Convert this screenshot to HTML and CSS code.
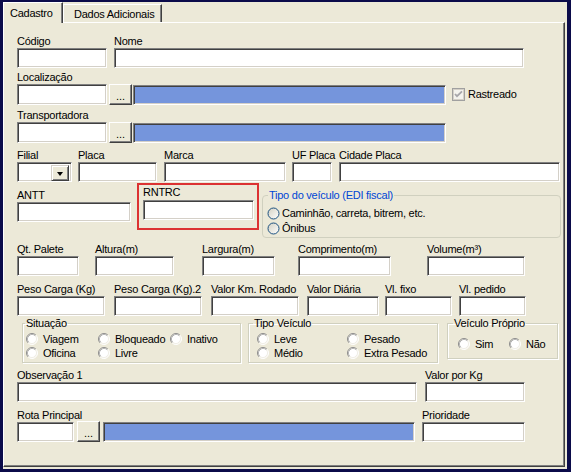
FILE: index.html
```html
<!DOCTYPE html>
<html lang="pt-BR">
<head>
<meta charset="utf-8">
<title>Cadastro</title>
<link rel="stylesheet" href="styles.css">
</head>
<body>
<svg class="defs" width="0" height="0" aria-hidden="true">
  <defs>
    <linearGradient id="xpg" x1="0" y1="0" x2="1" y2="1">
      <stop offset="0" stop-color="#D3D0C2"/>
      <stop offset="1" stop-color="#FFFFFF"/>
    </linearGradient>
    <symbol id="rc" viewBox="0 0 12 12">
      <circle cx="6" cy="6" r="5" fill="#fff"/>
      <path d="M2.11 9.89A5.5 5.5 0 0 1 9.89 2.11" fill="none" stroke="#8C8C8C"/>
      <path d="M9.89 2.11A5.5 5.5 0 0 1 2.11 9.89" fill="none" stroke="#fff"/>
      <path d="M2.82 9.18A4.5 4.5 0 0 1 9.18 2.82" fill="none" stroke="#B4B4B4"/>
      <path d="M9.18 2.82A4.5 4.5 0 0 1 2.82 9.18" fill="none" stroke="#F0EEE6"/>
    </symbol>
    <symbol id="rx" viewBox="0 0 13 13">
      <circle cx="6.5" cy="6.5" r="5.5" fill="url(#xpg)" stroke="#1C5180"/>
    </symbol>
  </defs>
</svg>
<div class="window">
  <div class="tabs">
    <div class="tab active">Cadastro</div>
    <div class="tab">Dados Adicionais</div>
  </div>
  <div class="panel">

    <div class="row r1">
      <div class="field w90"><span class="lbl">Código</span><div class="inp"></div></div>
      <div class="field w410 ml7"><span class="lbl">Nome</span><div class="inp"></div></div>
    </div>

    <div class="row r2 end">
      <div class="field w90"><span class="lbl">Localização</span><div class="inp h21"></div></div>
      <div class="dots ml2">...</div>
      <div class="bar w313 ml1"></div>
      <div class="chk ml6">
        <svg width="13" height="13" viewBox="0 0 13 13">
          <rect x="0.5" y="0.5" width="12" height="12" fill="none" stroke="#A0A0A0"/>
          <rect x="1.5" y="1.5" width="10" height="10" fill="#F4F3EE" stroke="#D4D0C8"/>
          <path d="M3 6l2 2.2L10 3.4" fill="none" stroke="#A7A6AA" stroke-width="1.8"/>
        </svg>
        <span class="chk-lbl">Rastreado</span>
      </div>
    </div>

    <div class="row r3 end">
      <div class="field w90"><span class="lbl">Transportadora</span><div class="inp h21"></div></div>
      <div class="dots ml2">...</div>
      <div class="bar w313 ml1"></div>
    </div>

    <div class="row r4">
      <div class="field w55"><span class="lbl">Filial</span>
        <div class="inp combo"><div class="drop"><span class="tri"></span></div></div>
      </div>
      <div class="field w79 ml6"><span class="lbl">Placa</span><div class="inp"></div></div>
      <div class="field w122 ml7"><span class="lbl">Marca</span><div class="inp"></div></div>
      <div class="field w40 ml6"><span class="lbl">UF Placa</span><div class="inp"></div></div>
      <div class="field w221 ml7"><span class="lbl">Cidade Placa</span><div class="inp"></div></div>
    </div>

    <div class="row r5">
      <div class="field w114 antt"><span class="lbl">ANTT</span><div class="inp"></div></div>
      <div class="redbox ml6">
        <div class="field w111"><span class="lbl">RNTRC</span><div class="inp"></div></div>
      </div>
      <fieldset class="xpgroup ml3">
        <legend>Tipo do veículo (EDI fiscal)</legend>
        <div class="xprow"><svg class="rxi" width="13" height="13"><use href="#rx"/></svg><span>Caminhão, carreta, bitrem, etc.</span></div>
        <div class="xprow"><svg class="rxi" width="13" height="13"><use href="#rx"/></svg><span>Ônibus</span></div>
      </fieldset>
    </div>

    <div class="row r6">
      <div class="field w62"><span class="lbl">Qt. Palete</span><div class="inp"></div></div>
      <div class="field w79 ml16"><span class="lbl">Altura(m)</span><div class="inp"></div></div>
      <div class="field w73 ml28"><span class="lbl">Largura(m)</span><div class="inp"></div></div>
      <div class="field w93 ml23"><span class="lbl">Comprimento(m)</span><div class="inp"></div></div>
      <div class="field w98 ml36"><span class="lbl">Volume(m³)</span><div class="inp"></div></div>
    </div>

    <div class="row r7">
      <div class="field w88"><span class="lbl">Peso Carga (Kg)</span><div class="inp"></div></div>
      <div class="field w88 ml9"><span class="lbl">Peso Carga (Kg).2</span><div class="inp"></div></div>
      <div class="field w88 ml9"><span class="lbl">Valor Km. Rodado</span><div class="inp"></div></div>
      <div class="field w72 ml8"><span class="lbl">Valor Diária</span><div class="inp"></div></div>
      <div class="field w67 ml6"><span class="lbl">Vl. fixo</span><div class="inp"></div></div>
      <div class="field w67 ml7"><span class="lbl">Vl. pedido</span><div class="inp"></div></div>
    </div>

    <div class="row r8">
      <fieldset class="grp g-sit">
        <legend>Situação</legend>
        <div class="opts">
          <div class="opt"><svg width="12" height="12"><use href="#rc"/></svg><span>Viagem</span></div>
          <div class="opt"><svg width="12" height="12"><use href="#rc"/></svg><span>Bloqueado</span></div>
          <div class="opt"><svg width="12" height="12"><use href="#rc"/></svg><span>Inativo</span></div>
          <div class="opt"><svg width="12" height="12"><use href="#rc"/></svg><span>Oficina</span></div>
          <div class="opt"><svg width="12" height="12"><use href="#rc"/></svg><span>Livre</span></div>
        </div>
      </fieldset>
      <fieldset class="grp g-tipo">
        <legend>Tipo Veículo</legend>
        <div class="opts">
          <div class="opt"><svg width="12" height="12"><use href="#rc"/></svg><span>Leve</span></div>
          <div class="opt"><svg width="12" height="12"><use href="#rc"/></svg><span>Pesado</span></div>
          <div class="opt"><svg width="12" height="12"><use href="#rc"/></svg><span>Médio</span></div>
          <div class="opt"><svg width="12" height="12"><use href="#rc"/></svg><span>Extra Pesado</span></div>
        </div>
      </fieldset>
      <fieldset class="grp g-prop">
        <legend>Veículo Próprio</legend>
        <div class="opts">
          <div class="opt"><svg width="12" height="12"><use href="#rc"/></svg><span>Sim</span></div>
          <div class="opt"><svg width="12" height="12"><use href="#rc"/></svg><span>Não</span></div>
        </div>
      </fieldset>
    </div>

    <div class="row r9">
      <div class="field w400"><span class="lbl">Observação 1</span><div class="inp"></div></div>
      <div class="field w100 ml8"><span class="lbl">Valor por Kg</span><div class="inp"></div></div>
    </div>

    <div class="row r10 end">
      <div class="field w57"><span class="lbl">Rota Principal</span><div class="inp"></div></div>
      <div class="dots ml3 h20">...</div>
      <div class="bar w312 ml3"></div>
      <div class="field w103 ml7"><span class="lbl">Prioridade</span><div class="inp"></div></div>
    </div>

  </div>
</div>
</body>
</html>
```

FILE: styles.css
```css
* { box-sizing: border-box; }
html, body { margin: 0; padding: 0; }
body {
  width: 571px;
  height: 472px;
  overflow: hidden;
  background: #0B0B4A;
  font-family: "Liberation Sans", Arial, sans-serif;
  font-size: 11px;
  line-height: 13px;
  letter-spacing: -0.25px;
  color: #000;
}
.defs { position: absolute; width: 0; height: 0; }

.window {
  margin: 2px 4px 3px 3px;
  height: 467px;
  background: #ECE9D8;
  display: flex;
  flex-direction: column;
}

/* tabs */
.tabs {
  display: flex;
  align-items: flex-end;
  height: 20px;
  position: relative;
  z-index: 2;
}
.tab {
  height: 18px;
  padding: 3px 7px 0 10px;
  border: 1px solid;
  border-color: #fff #404040 transparent #fff;
  border-bottom: none;
  box-shadow: inset -1px 0 0 #808080;
  white-space: nowrap;
  background: #ECE9D8;
}
.tab.active {
  height: 21px;
  width: 60px;
  margin-bottom: -1px;
  padding: 4px 0 0 6px;
}

/* tab panel */
.panel {
  flex: 1;
  margin: 0 2px 2px 0;
  border: 1px solid;
  border-color: #fff #404040 #404040 #fff;
  box-shadow: inset -1px -1px 0 #808080;
  padding-left: 13px;
}

.row { display: flex; align-items: flex-start; }
.row.end { align-items: flex-end; }
.field { display: flex; flex-direction: column; }
.lbl { height: 13px; white-space: nowrap; }

.inp {
  height: 20px;
  background: #fff;
  border: 1px solid;
  border-color: #808080 #fff #fff #808080;
  box-shadow: inset 1px 1px 0 #404040, inset -1px -1px 0 #D4D0C8;
}
.h21 { height: 21px; }
.h20 { height: 20px; }

.bar {
  height: 20px;
  background: #7595DC;
  border: 1px solid;
  border-color: #808080 #fff #fff #808080;
  box-shadow: inset 1px 1px 0 #404040, inset -1px -1px 0 #D4D0C8;
}

.dots {
  width: 23px;
  height: 21px;
  background: #ECE9D8;
  border: 1px solid;
  border-color: #fff #404040 #404040 #fff;
  box-shadow: inset -1px -1px 0 #808080;
  text-align: center;
  padding-top: 5px;
  letter-spacing: 0;
}

.chk { display: flex; align-items: center; margin-bottom: 4px; }
.chk svg { display: block; }
.chk-lbl { margin-left: 3px; }

.combo { display: flex; justify-content: flex-end; padding: 1px; }
.drop {
  width: 18px;
  height: 16px;
  margin: 1px;
  background: #ECE9D8;
  border: 1px solid;
  border-color: #D4D0C8 #404040 #404040 #D4D0C8;
  box-shadow: inset 1px 1px 0 #fff, inset -1px -1px 0 #808080;
  display: flex;
  align-items: center;
  justify-content: center;
}
.tri {
  width: 0; height: 0;
  border-left: 3.5px solid transparent;
  border-right: 3.5px solid transparent;
  border-top: 4px solid #000;
  margin-top: 1px;
}

/* widths and offsets */
.w40 { width: 40px; } .w55 { width: 55px; } .w57 { width: 57px; }
.w62 { width: 62px; } .w67 { width: 67px; } .w72 { width: 72px; }
.w73 { width: 73px; } .w79 { width: 79px; } .w88 { width: 88px; }
.w90 { width: 90px; } .w93 { width: 93px; } .w98 { width: 98px; }
.w100 { width: 100px; } .w103 { width: 103px; } .w111 { width: 111px; }
.w114 { width: 114px; } .w122 { width: 122px; } .w221 { width: 221px; }
.w312 { width: 312px; } .w313 { width: 313px; } .w400 { width: 400px; }
.w410 { width: 410px; }
.ml1 { margin-left: 1px; } .ml2 { margin-left: 2px; } .ml3 { margin-left: 3px; }
.ml6 { margin-left: 6px; } .ml7 { margin-left: 7px; } .ml8 { margin-left: 8px; }
.ml9 { margin-left: 9px; } .ml16 { margin-left: 16px; } .ml23 { margin-left: 23px; }
.ml28 { margin-left: 28px; } .ml36 { margin-left: 36px; }

/* row vertical placement */
.r1 { margin-top: 12px; }
.r2 { margin-top: 3px; }
.r3 { margin-top: 4px; }
.r4 { margin-top: 6px; }
.r5 { margin-top: 1px; height: 55px; }
.r6 { margin-top: 5px; }
.r7 { margin-top: 7px; }
.r8 { margin-top: 1px; }
.r9 { margin-top: 6px; }
.r10 { margin-top: 7px; }

.antt { margin-top: 6px; }
.redbox {
  width: 122px;
  height: 47px;
  border: 2px solid #DC3232;
  padding: 1px 0 0 4px;
}
.redbox .lbl { height: 14px; }

/* XP group box */
.xpgroup {
  margin: 6px 0 0 3px;
  padding: 0 0 0 4px;
  width: 299px;
  height: 49px;
  border: 1px solid #D0D0BF;
  border-radius: 4px;
  min-width: 0;
}
.xpgroup legend {
  color: #0046D5;
  padding: 0 1px;
  margin-left: 1px;
  line-height: 13px;
}
.xprow { display: flex; align-items: center; height: 15px; }
.xprow:first-of-type { margin-top: 4px; }
.rxi { display: block; margin-right: 2px; flex: none; }

/* classic group boxes */
.grp {
  margin: 0;
  padding: 0;
  min-width: 0;
  border: 1px solid #D0D0BF;
  box-shadow: inset 1px 1px 0 #fff, 1px 1px 0 #fff;
}
.grp legend { padding: 0 1px; line-height: 13px; }
.opts { display: grid; }
.opt { display: flex; align-items: center; height: 14px; white-space: nowrap; }
.opt svg { display: block; flex: none; margin-right: 5px; }

.g-sit { width: 219px; height: 46px; margin-left: 5px; }
.g-sit legend { margin-left: 2px; }
.g-sit .opts { grid-template-columns: 72px 72px auto; margin: 2px 0 0 3px; }

.g-tipo { width: 190px; height: 46px; margin-left: 7px; }
.g-tipo legend { margin-left: 4px; }
.g-tipo .opts { grid-template-columns: 90px auto; margin: 2px 0 0 8px; }

.g-prop { width: 111px; height: 42px; margin-left: 9px; }
.g-prop legend { margin-left: 5px; }
.g-prop .opts { grid-template-columns: 51px auto; margin: 7px 0 0 10px; }
```
